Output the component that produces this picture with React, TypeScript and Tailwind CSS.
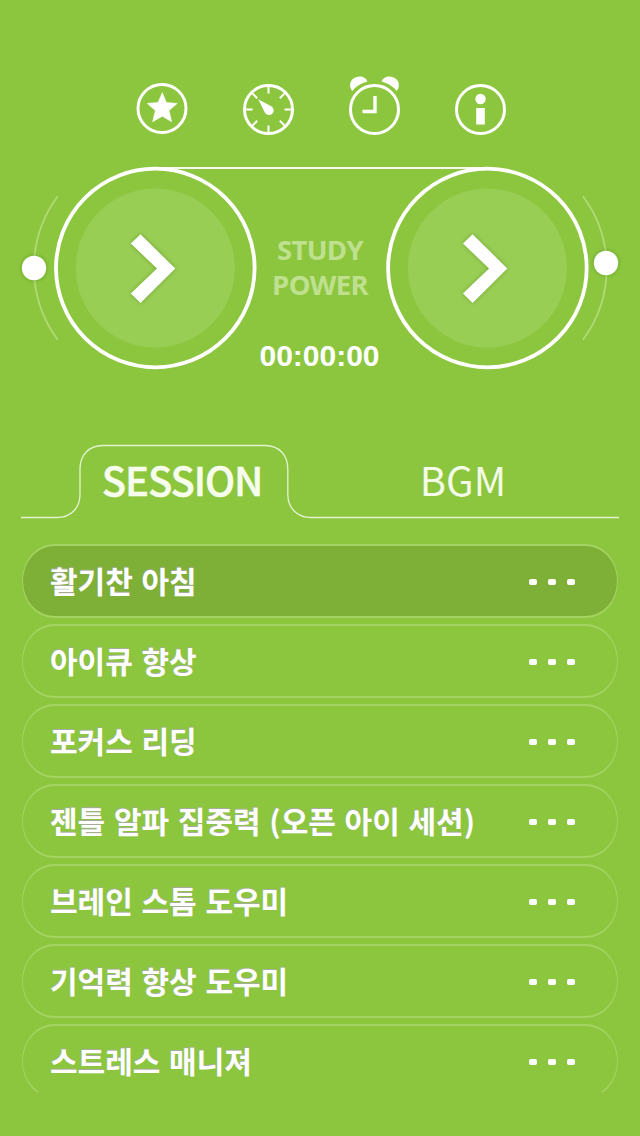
import { useState } from 'react';
import clsx from 'clsx';

type Tab = 'session' | 'bgm';

type DialProps = {
  label: string;
  viewBox: string;
  cx: number;
  trackPath: string;
  knob: { x: number; y: number };
};

const sessions = [
  '활기찬 아침',
  '아이큐 향상',
  '포커스 리딩',
  '젠틀 알파 집중력 (오픈 아이 세션)',
  '브레인 스톰 도우미',
  '기억력 향상 도우미',
  '스트레스 매니져',
];

const gaugeTicks = [0, 45, 90, 135, 180, 225, 270, 315];

function StarIcon() {
  return (
    <svg aria-hidden className="h-[60px] w-[54px]" viewBox="0 0 54 60">
      <circle cx="27" cy="33.5" fill="none" r="24" stroke="white" strokeWidth="3" />
      <path
        d="M27.3 17.7 31.4 27.6 42.2 28.4 34 35.5 36.7 46.7 27.3 41.2 17.7 46.7 20.4 35.5 12.2 28.4 23 27.6Z"
        fill="white"
        stroke="white"
        strokeWidth="0.6"
      />
    </svg>
  );
}

function GaugeIcon() {
  return (
    <svg aria-hidden className="h-[60px] w-[54px]" viewBox="0 0 54 60">
      <circle cx="27.5" cy="34.5" fill="none" r="24" stroke="white" strokeWidth="3" />
      {gaugeTicks.map((angle) => (
        <path key={angle} d="M27.5 11V18.5" stroke="white" strokeWidth="2" transform={`rotate(${angle} 27.5 34.5)`} />
      ))}
      <path d="M17.2 24.3 30.2 31.2A4.7 4.7 0 1 1 23.7 37.2Z" fill="white" />
    </svg>
  );
}

function AlarmIcon() {
  return (
    <svg aria-hidden className="h-[60px] w-[54px]" viewBox="0 0 54 60">
      <circle cx="27.5" cy="34.5" fill="none" r="24" stroke="white" strokeWidth="3" />
      <path d="M5.3 16C2.2 12.5 2.3 7.2 5.8 4.1C10.3 .1 18.3.6 20.5 6.6A28.6 28.6 0 0 0 5.3 16Z" fill="white" />
      <path d="M49.7 16C52.8 12.5 52.7 7.2 49.2 4.1C44.7 .1 36.7.6 34.5 6.6A28.6 28.6 0 0 1 49.7 16Z" fill="white" />
      <path d="M28 21V36.5H15.5" fill="none" stroke="white" strokeWidth="3.4" />
    </svg>
  );
}

function InfoIcon() {
  return (
    <svg aria-hidden className="h-[60px] w-[54px]" viewBox="0 0 54 60">
      <circle cx="27.5" cy="34.5" fill="none" r="24" stroke="white" strokeWidth="3" />
      <circle cx="27.5" cy="24" fill="white" r="5.2" />
      <path d="M23.2 33H31.8V49.5H23.2Z" fill="white" />
    </svg>
  );
}

function Dial({ label, viewBox, cx, trackPath, knob }: DialProps) {
  return (
    <button aria-label={label} className="shrink-0" type="button">
      <svg className="h-[216px] w-[240px]" viewBox={viewBox}>
        <path d={trackPath} fill="none" stroke="#b0da77" strokeWidth="1.8" />
        <circle cx={cx} cy="268" fill="#99ce55" r="79.5" />
        <circle cx={cx} cy="268" fill="none" r="99.3" stroke="white" strokeWidth="3.8" />
        <g className="drop-shadow-[0_0_2px_rgba(60,110,10,0.45)]">
          <path
            d="M-24.5 243.5-14.8 234.3 20 268.5-14.8 303-24.5 293.6 1.6 268.5Z"
            fill="white"
            transform={`translate(${cx} 0)`}
          />
          <circle cx={knob.x} cy={knob.y} fill="white" r="12.2" />
        </g>
      </svg>
    </button>
  );
}

export default function App() {
  const [activeTab, setActiveTab] = useState<Tab>('session');
  const [selected, setSelected] = useState(0);

  return (
    <main className="flex h-[1136px] w-[640px] flex-col overflow-hidden bg-[#8cc63f] font-['Noto_Sans_CJK_KR',sans-serif] text-white">
      <nav className="flex gap-[52px] pt-[75px] pl-[135px]">
        <button aria-label="Favorites" type="button">
          <StarIcon />
        </button>
        <button aria-label="Speed" type="button">
          <GaugeIcon />
        </button>
        <button aria-label="Alarm" type="button">
          <AlarmIcon />
        </button>
        <button aria-label="Info" type="button">
          <InfoIcon />
        </button>
      </nav>

      <section className="relative mt-[25px] flex h-[216px] px-[18px]">
        <div className="absolute top-[7px] left-[155px] h-[2px] w-[332px] bg-white/90" />
        <Dial
          cx={155.3}
          knob={{ x: 34, y: 268 }}
          label="Play session"
          trackPath="M57.7 196.3A120.5 120.5 0 0 0 57.7 339.7"
          viewBox="18 160 240 216"
        />
        <div className="flex w-[124px] shrink-0 flex-col items-center">
          <p className="mt-[72px] text-center font-['Open_Sans',sans-serif] text-[27.5px] leading-[35px] font-bold tracking-[-0.7px] whitespace-nowrap text-[#bfe08f]">
            STUDY
            <br />
            POWER
          </p>
          <p className="mt-[38px] -ml-px font-['Liberation_Sans',sans-serif] text-[30px] leading-[32px] font-bold">
            00:00:00
          </p>
        </div>
        <Dial
          cx={487.4}
          knob={{ x: 606, y: 263 }}
          label="Play music"
          trackPath="M583 196.3A120.5 120.5 0 0 1 583 339.7"
          viewBox="382 160 240 216"
        />
      </section>

      <div className="relative mt-[66px] flex h-[80px]">
        <svg aria-hidden className="absolute inset-0 h-[80px] w-[640px]" viewBox="0 442 640 80">
          <path
            d="M21 517.5H57C71 517.5 80 508 80 494V469C80 455 89 445.5 103 445.5H265C279 445.5 287.8 455 287.8 469V494C287.8 508 297 517.5 311 517.5H619"
            fill="none"
            stroke="#e4f3d0"
            strokeWidth="1.3"
          />
        </svg>
        <button
          className="relative ml-[80px] w-[208px] pr-1 pb-[6px] text-[40px] leading-[74px] font-medium tracking-[-1.1px] text-[#f7fdec] [-webkit-text-stroke:0.5px_#f7fdec]"
          onClick={() => setActiveTab('session')}
          type="button">
          SESSION
        </button>
        <button
          className="relative ml-[72px] w-[206px] pb-[6px] text-[40px] leading-[74px] font-normal text-[#f4fbe6]"
          onClick={() => setActiveTab('bgm')}
          type="button">
          BGM
        </button>
      </div>

      <ul className={clsx('mx-[22px] mt-[22px] h-[548px] space-y-[6px] overflow-hidden', activeTab === 'bgm' && 'hidden')}>
        {sessions.map((title, index) => (
          <li
            key={title}
            className={clsx(
              'flex h-[74px] items-center justify-between rounded-[32px/37px] border-x-[1.5px] border-y-2 border-[#a3d362] pr-[42px] pl-[27px]',
              selected === index && 'border-[#94c653] bg-[#7eb037]',
            )}
            onClick={() => setSelected(index)}>
            <span className="pb-[3px] text-[30px] leading-none font-bold whitespace-nowrap text-shadow-[0_-1px_0_#a8aca0] [word-spacing:1.9px]">
              {title}
            </span>
            <span className="flex gap-[11px] pt-[2px]">
              <span className="h-[6px] w-2 rounded-[2px] bg-white" />
              <span className="h-[6px] w-2 rounded-[2px] bg-white" />
              <span className="h-[6px] w-2 rounded-[2px] bg-white" />
            </span>
          </li>
        ))}
      </ul>
    </main>
  );
}
